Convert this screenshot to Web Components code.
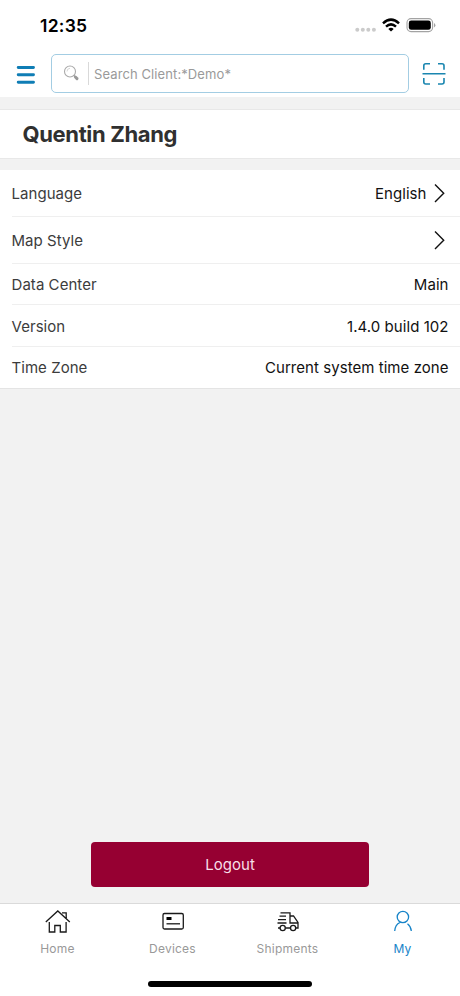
<!DOCTYPE html>
<html lang="en">
<head>
<meta charset="utf-8">
<title>My</title>
<style>
html,body{margin:0;padding:0;background:#f2f2f2;font-family:Inter,"Liberation Sans",sans-serif}
</style>
</head>
<body>
<my-page></my-page>
<script>
function define(name, html) {
  const t = document.createElement('template');
  t.innerHTML = html;
  customElements.define(name, class extends HTMLElement {
    constructor() {
      super();
      this.attachShadow({mode: 'open'}).appendChild(t.content.cloneNode(true));
    }
  });
}

define('status-bar', `
<style>
:host{display:flex;height:50px;box-sizing:border-box;padding:1px 24px 0 40px;align-items:center;justify-content:space-between;color:#000}
.time{font-size:17.500px;font-weight:600;line-height:20px;letter-spacing:.25px}
svg{display:block;margin-top:-2px}
</style>
<span class="time">12:35</span>
<svg width="82" height="18" viewBox="354 16 82 18">
<g fill="#cbcbcb"><circle cx="357.3" cy="29.8" r="2"/><circle cx="362.8" cy="29.8" r="2"/><circle cx="368.3" cy="29.8" r="2"/><circle cx="373.9" cy="29.8" r="2"/></g>
<g fill="none" stroke="#000" stroke-width="2.5"><path d="M383 23.3Q391 16 399 23.3"/><path d="M386 26.6Q391 22.2 396 26.6"/></g>
<path d="M388.3 28.9Q391 26.7 393.7 28.9L391 31.6Z"/>
<rect x="407" y="18.6" width="25.6" height="13" rx="4" fill="none" stroke="#a3a3a3" stroke-width="1.1"/>
<rect x="408.8" y="20.5" width="22" height="9.3" rx="2.4"/>
<path d="M434 23v4.4q1.4-.7 1.4-2.2t-1.4-2.2z" fill="#a3a3a3"/>
</svg>`);

define('search-bar', `
<style>
:host{display:flex;height:47px;box-sizing:border-box;padding:4px 14px 0 16px;align-items:flex-start;background:#fff}
svg{display:block;flex:none}
.menu{margin:11px 15px 0 0}
.box{flex:1;display:flex;align-items:center;box-sizing:border-box;height:39px;border:1px solid #a3cde3;border-radius:5px;padding-left:11px;color:#9a9a9a;font-size:13px;letter-spacing:.1px}
.line{width:1px;height:23px;background:#d9d9d9;margin:0 5px 0 8px}
.scan{margin:8px 0 0 13px}
</style>
<svg class="menu" width="20" height="20" viewBox="16 65 20 20"><path d="M18.2 67.5h15.3M18.2 74.8h15.3M18.2 82.3h15.3" stroke="#0f7db5" stroke-width="2.9" stroke-linecap="round"/></svg>
<div class="box">
<svg width="17" height="17" viewBox="63 64 17 17"><circle cx="70" cy="70.500" r="5.5" fill="none" stroke="#aaa" stroke-width="1.1"/><path d="M67 70.500a3.2 3.2 0 0 1 3-3.2" fill="none" stroke="#ccc" stroke-width=".8"/><path d="M73.800 74.300l1.500 1.500" stroke="#999" stroke-width="1.200"/><path d="M75.400 76l1.600 1.600" stroke="#999" stroke-width="3" stroke-linecap="round"/></svg>
<span class="line"></span><span>Search Client:*Demo*</span></div>
<svg class="scan" width="24" height="24" viewBox="422 62 24 24"><path d="M423.800 69.800v-4q0-2 2-2h4.200M438 63.800h4q2 0 2 2v4M423.800 78v4q0 2 2 2h4.200M438 84h4q2 0 2-2v-4M422.500 73.700h23" fill="none" stroke="#1a86b0" stroke-width="1.600"/></svg>`);

define('profile-name', `
<style>
:host{display:block;height:50px;box-sizing:border-box;margin:12px 0 11px;border:solid #e8e8e8;border-width:1px 0;background:#fff;padding-left:22.500px;font-size:22px;font-weight:700;line-height:49px;letter-spacing:-.36px;color:#303030}
</style><slot></slot>`);

define('setting-list', `
<style>
:host{display:block;background:#fff;border-bottom:1px solid #e4e4e4}
</style><slot></slot>`);

define('setting-row', `
<style>
:host{display:flex;height:41.400px;box-sizing:border-box;margin-left:12px;padding:1px 12px 0 0;align-items:center;justify-content:space-between;border-bottom:1px solid #efefef;font-size:15px;color:#3c3c3c;letter-spacing:.05px}
:host([link]){height:47px}
:host(:last-of-type){border:0}
.label{margin-left:-.5px}
.value{display:flex;align-items:center;margin-right:-.5px;color:#111}
svg{display:none;margin:-2px 3px 0 6px}
:host([link]) svg{display:block}
</style>
<span class="label"><slot name="label"></slot></span>
<span class="value"><slot></slot><svg width="13" height="20" viewBox="0 0 13 20"><path d="M2 1.500l8.700 8.700L2 18.900" fill="none" stroke="#111" stroke-width="1.400"/></svg></span>`);

define('logout-button', `
<style>
:host{display:flex;width:278px;height:45px;margin:auto auto 16px;align-items:center;justify-content:center;background:#960032;border-radius:4px;color:#f8dfe8;font-size:15px;letter-spacing:.05px}
</style><slot></slot>`);

define('tab-item', `
<style>
:host{display:flex;flex:1;flex-direction:column;align-items:center;font-size:12px;line-height:16px;letter-spacing:.22px;color:#999;gap:5px}
:host([active]){color:#1784c8}
::slotted(svg){display:block;fill:none;stroke:#1a1a1a;stroke-width:1.300}
:host([active]) ::slotted(svg){stroke:#1784c8}
</style><slot></slot><span><slot name="label"></slot></span>`);

define('tab-bar', `
<style>
:host{display:flex;flex-direction:column;height:93px;box-sizing:border-box;background:#fff;border-top:1px solid #dadada}
nav{display:flex;padding-top:4px}
.home{width:164px;height:5.500px;border-radius:3px;background:#000;margin:auto auto 9.500px}
</style><nav><slot></slot></nav><div class="home"></div>`);

define('my-page', `
<style>
:host{display:flex;flex-direction:column;width:460px;height:996px;background:#f2f2f2}
header{background:#fff}
</style>
<header><status-bar></status-bar><search-bar></search-bar></header>
<profile-name>Quentin Zhang</profile-name>
<setting-list>
<setting-row link><span slot="label">Language</span>English</setting-row>
<setting-row link><span slot="label">Map Style</span></setting-row>
<setting-row><span slot="label">Data Center</span>Main</setting-row>
<setting-row><span slot="label">Version</span>1.4.0 build 102</setting-row>
<setting-row><span slot="label">Time Zone</span>Current system time zone</setting-row>
</setting-list>
<logout-button>Logout</logout-button>
<tab-bar>
<tab-item><svg width="28" height="28" viewBox="43.500 908 28 28"><path d="M45.300 922L57.300 911l12 11M48.800 922v10h5.500v-6.500h5.500v6.500h5.800v-10M61.500 912.800h4.200v5.500"/></svg><span slot="label">Home</span></tab-item>
<tab-item><svg width="28" height="28" viewBox="158.500 908 28 28"><rect x="162.500" y="913.500" width="20.300" height="15.500" rx="1.500"/><path d="M166 923.800h13.500"/><path d="M166 917h5v3h-5z" fill="#000" stroke="none"/></svg><span slot="label">Devices</span></tab-item>
<tab-item><svg width="28" height="28" viewBox="273.500 908 28 28"><path d="M280 912.800h9.500v10.200h8M289.500 916h3.500l4.500 6.500v5.500h-2M279 916.200h6.500M277.500 919.600h8M277 923h9M277.500 928h2M285 928h5"/><circle cx="282.200" cy="928" r="2.600"/><circle cx="292.600" cy="928" r="2.600"/></svg><span slot="label">Shipments</span></tab-item>
<tab-item active><svg width="28" height="28" viewBox="388.500 908 28 28"><circle cx="402.400" cy="917" r="5.700"/><path d="M394.200 931q.5-6.500 5.300-8.500M407 923.800q3.300 2.500 3.800 7.200"/></svg><span slot="label">My</span></tab-item>
</tab-bar>`);
</script>
</body>
</html>
